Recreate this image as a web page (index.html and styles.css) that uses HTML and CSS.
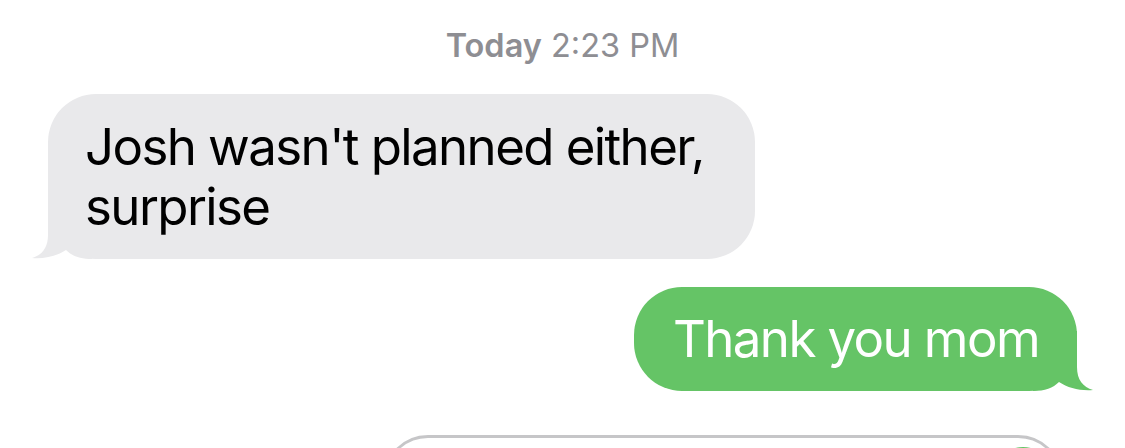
FILE: index.html
```html
<!DOCTYPE html>
<html lang="en">
<head>
  <meta charset="UTF-8">
  <meta name="viewport" content="width=device-width, initial-scale=1.0">
  <title>Messages</title>
  <link rel="stylesheet" href="styles.css">
</head>
<body>
  <main class="thread">
    <p class="timestamp"><span class="day">Today</span> 2:23 PM</p>

    <div class="bubble received">
      <svg class="tail" viewBox="0 0 60 60" aria-hidden="true">
        <path d="M16 0 L16 36 C16 49 10 56 0 59 C13 60 25 57 34 51 C40 57 48 60 60 60 L60 0 Z"/>
      </svg>
      <span class="text">Josh wasn't planned either, surprise</span>
    </div>

    <div class="bubble sent">
      <svg class="tail" viewBox="0 0 60 60" aria-hidden="true">
        <path d="M16 0 L16 36 C16 49 10 56 0 59 C13 60 25 57 34 51 C40 57 48 60 60 60 L60 0 Z"/>
      </svg>
      <span class="text">Thank you mom</span>
    </div>

    <div class="compose">
      <span class="send-button"></span>
    </div>
  </main>
</body>
</html>
```

FILE: styles.css
```css
* {
  margin: 0;
  padding: 0;
  box-sizing: border-box;
}

:root {
  --color-gray-bubble: #e9e9eb;
  --color-green: #65c466;
  --color-meta: #8e8e93;
  --color-border: #c6c6c8;
  --color-white: #ffffff;
}

body {
  font-family: 'Inter', 'Roboto', sans-serif;
  background-color: var(--color-white);
}

.thread {
  display: flex;
  flex-direction: column;
  height: 100vh;
  overflow: hidden;
  padding: 26px 48px 0;
}

.timestamp {
  align-self: center;
  font-size: 32.5px;
  line-height: 40px;
  color: var(--color-meta);
  margin-bottom: 28px;
}

.timestamp .day {
  font-weight: 600;
}

.bubble {
  position: relative;
  flex-shrink: 0;
  font-size: 51px;
  line-height: 60px;
  letter-spacing: -1.6px;
  padding: 23px 38px 22px;
  border-radius: 48px;
}

.bubble .text {
  position: relative;
}

.bubble .tail {
  position: absolute;
  bottom: 0;
  width: 60px;
  height: 60px;
}

.received {
  align-self: flex-start;
  max-width: 707px;
  padding-left: 37px;
  background-color: var(--color-gray-bubble);
  color: #000;
}

.received .tail {
  left: -16px;
  fill: var(--color-gray-bubble);
}

.sent {
  align-self: flex-end;
  margin-top: 28px;
  padding: 22px 38px 22px 39px;
  background-color: var(--color-green);
  color: var(--color-white);
}

.sent .tail {
  right: -16px;
  fill: var(--color-green);
  transform: scaleX(-1);
}

.compose {
  display: flex;
  flex-shrink: 0;
  justify-content: flex-end;
  align-self: flex-end;
  width: 680px;
  height: 90px;
  margin-top: 44px;
  margin-right: 14px;
  padding: 9px 6px;
  border: 3px solid var(--color-border);
  border-radius: 54px;
}

.send-button {
  width: 62px;
  height: 62px;
  border-radius: 50%;
  background-color: var(--color-green);
}
```
